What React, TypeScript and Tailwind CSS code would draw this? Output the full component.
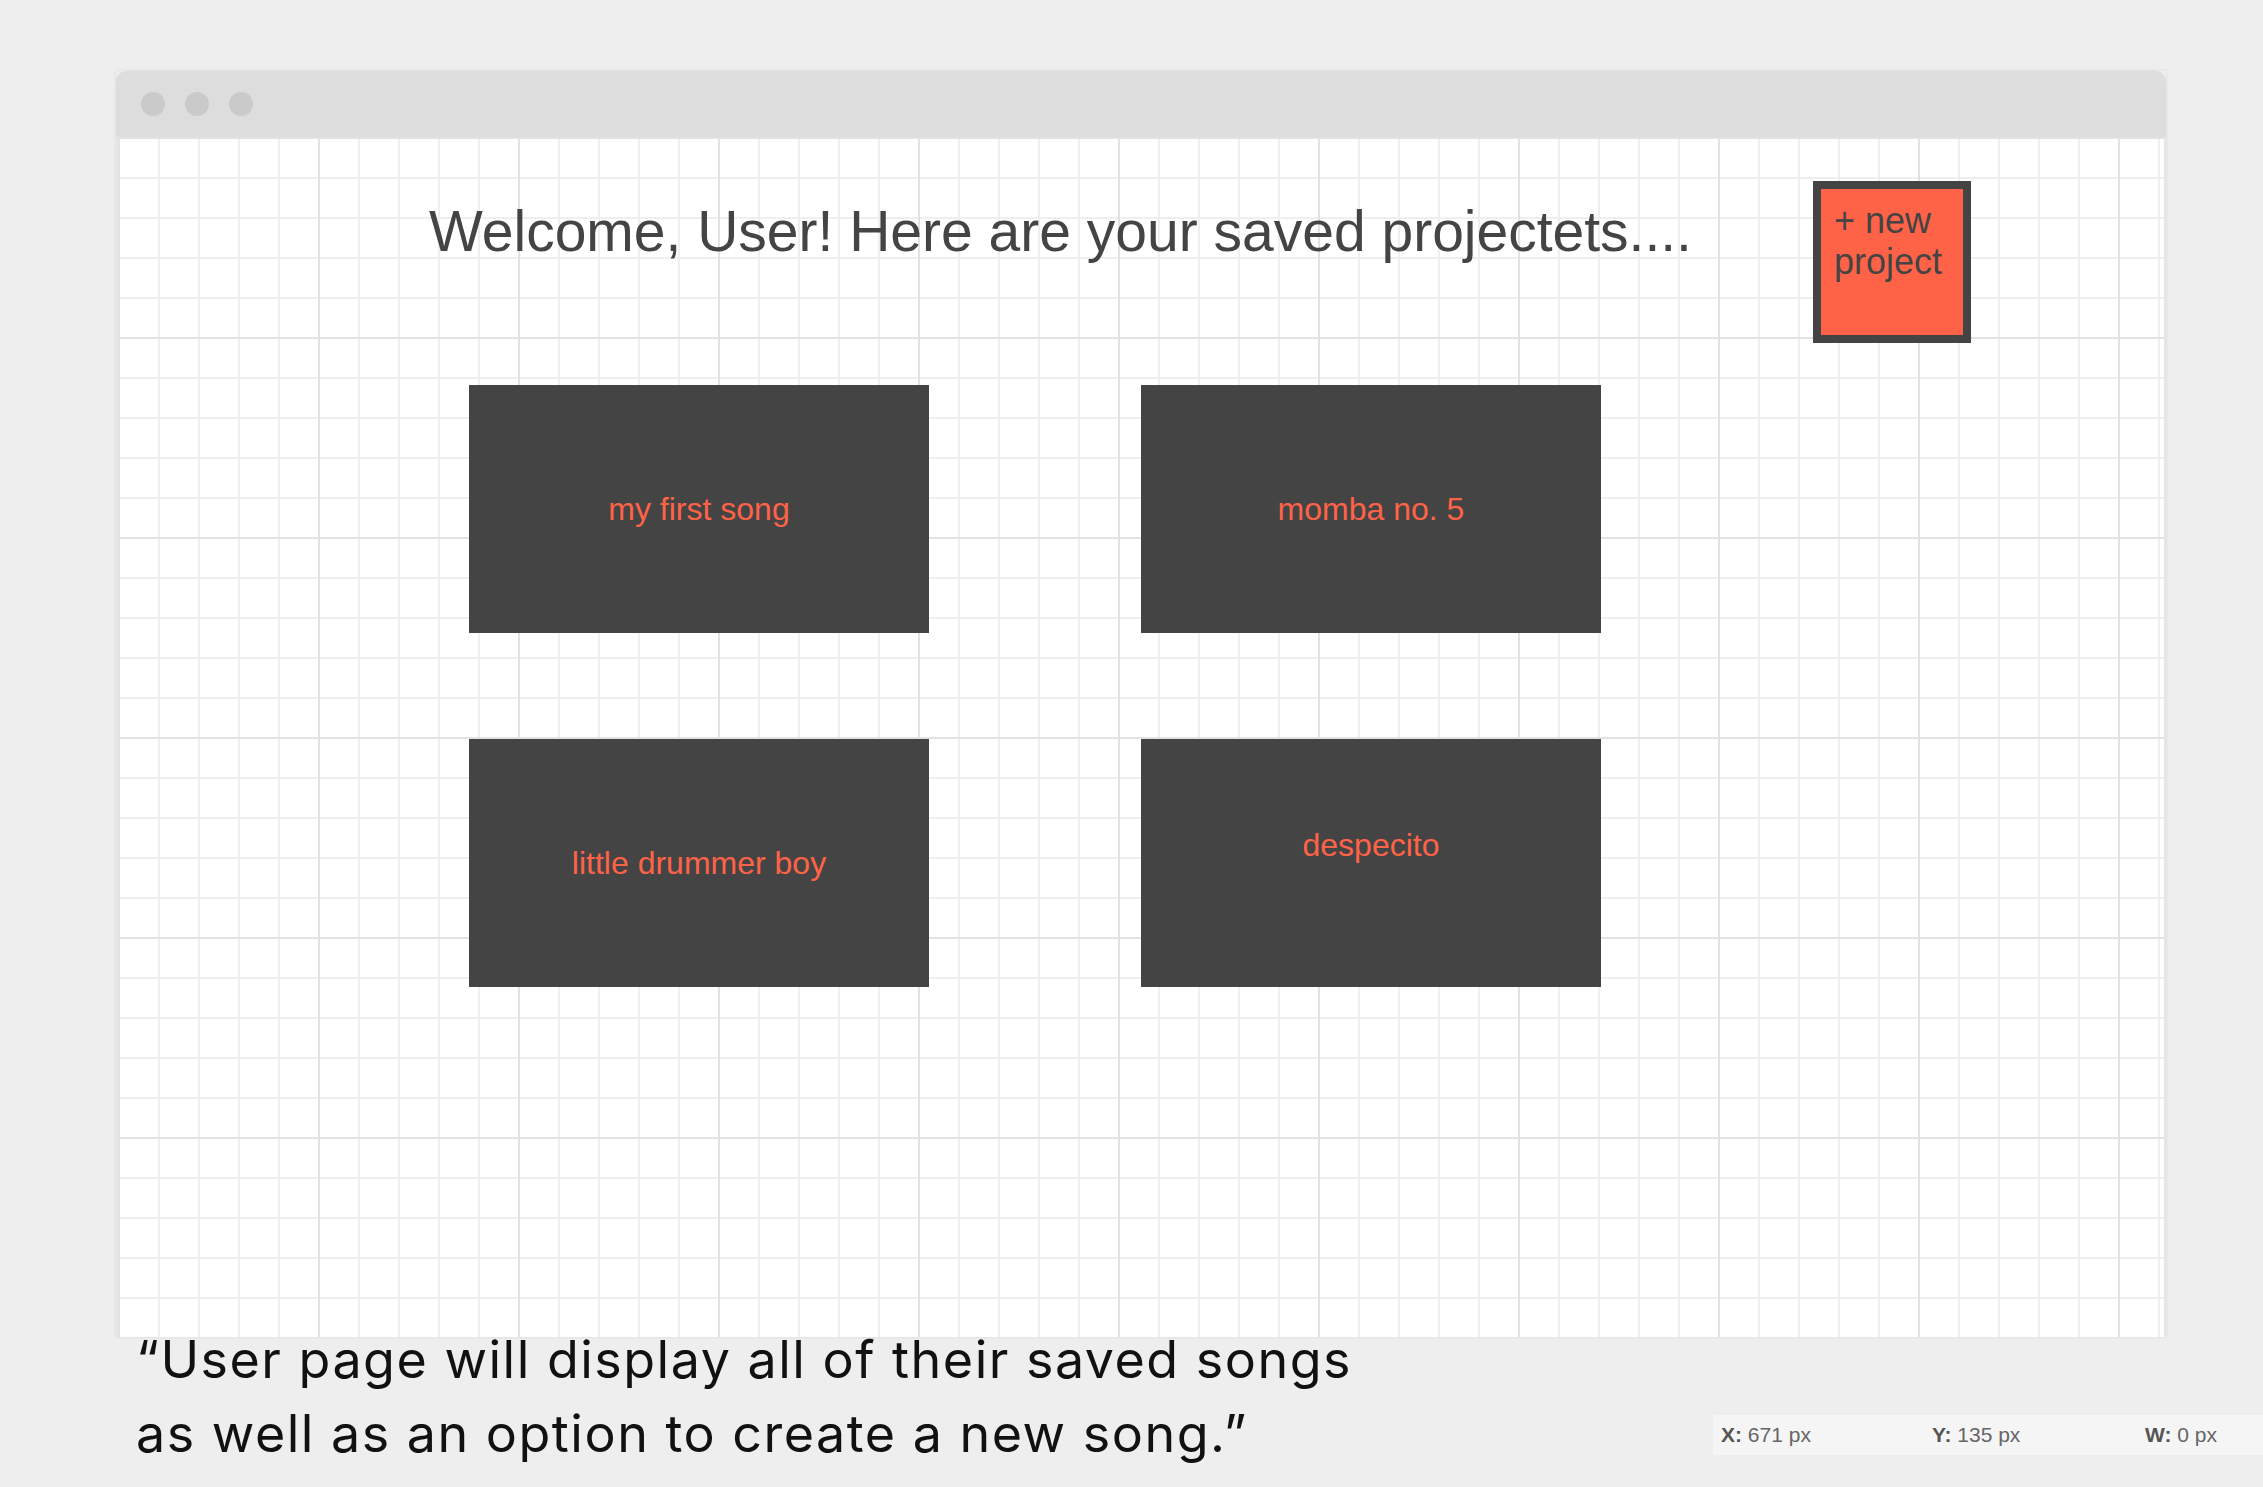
import React from "react"

const songs = [
  { title: "my first song", lift: false },
  { title: "momba no. 5", lift: false },
  { title: "little drummer boy", lift: false },
  { title: "despecito", lift: true },
]

function SongCard({ title, lift }: { title: string; lift: boolean }) {
  return (
    <div
      className={`flex h-[248px] w-[460px] items-center justify-center bg-[#444444] text-[32px] leading-[37px] text-[#ff6347] ${
        lift ? "pb-[36px]" : ""
      }`}
    >
      {title}
    </div>
  )
}

export default function App() {
  return (
    <div className="relative min-h-[1487px] w-full overflow-hidden bg-[#eeeeee] pt-[71px] [font-family:'Liberation_Sans',Arial,sans-serif]">
      {/* browser window */}
      <div className="ml-[116px] w-[2050px] shadow-[0_0_3px_rgba(0,0,0,0.1)]">
        <div className="flex h-[66px] items-center gap-[20px] rounded-t-[10px] bg-[#dddddd] pl-[25px]">
          <span className="h-[24px] w-[24px] rounded-full bg-[#cacaca]" />
          <span className="h-[24px] w-[24px] rounded-full bg-[#cacaca]" />
          <span className="h-[24px] w-[24px] rounded-full bg-[#cacaca]" />
        </div>
        <div className="h-[1200px] border-x-2 border-[#e6e6e6] bg-white [background-image:linear-gradient(to_right,#e2e2e2_2px,transparent_2px),linear-gradient(to_bottom,#e2e2e2_2px,transparent_2px),linear-gradient(to_right,#efefef_2px,transparent_2px),linear-gradient(to_bottom,#efefef_2px,transparent_2px)] [background-size:200px_200px,200px_200px,40px_40px,40px_40px]">
          <div className="flex items-start justify-between pl-[311px] pr-[193px] pt-[44px]">
            <h1 className="mt-[18px] text-[57px] leading-[64px] font-normal text-[#444444]">
              Welcome, User! Here are your saved projectets....
            </h1>
            <button
              type="button"
              className="flex h-[162px] w-[158px] flex-col items-start justify-start border-8 border-[#444444] bg-[#ff6347] pl-[13px] pt-[11px] text-left text-[36px] leading-[41px] text-[#444444]"
            >
              <span>+ new</span>
              <span>project</span>
            </button>
          </div>

          <div className="mt-[42px] grid grid-cols-[460px_460px] gap-x-[212px] gap-y-[106px] pl-[351px]">
            {songs.map((s) => (
              <SongCard key={s.title} title={s.title} lift={s.lift} />
            ))}
          </div>
        </div>
      </div>

      {/* caption */}
      <p className="relative -mt-[14px] ml-[136px] text-[52px] leading-[74px] tracking-[1.5px] text-[#111111] [font-family:Inter,sans-serif]">
        “User page will display all of their saved songs
        <br />
        as well as an option to create a new song.”
      </p>

      {/* measurement bar */}
      <div className="absolute left-[1713px] top-[1415px] flex h-[40px] w-[560px] items-center bg-[#f5f5f5] text-[21px] text-[#666666]">
        <span className="absolute left-[8px]">
          <b className="text-[#555555]">X:</b> 671 px
        </span>
        <span className="absolute left-[219px]">
          <b className="text-[#555555]">Y:</b> 135 px
        </span>
        <span className="absolute left-[432px]">
          <b className="text-[#555555]">W:</b> 0 px
        </span>
      </div>
    </div>
  )
}
